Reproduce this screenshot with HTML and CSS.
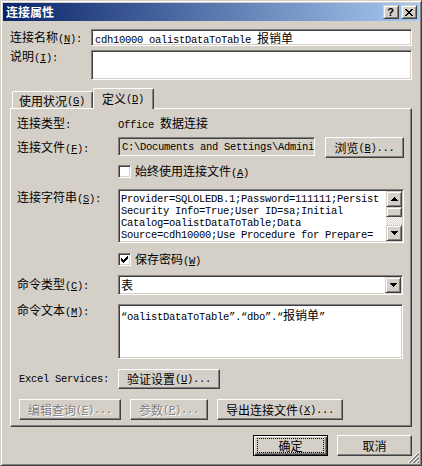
FILE: index.html
```html
<!DOCTYPE html>
<html lang="zh-CN">
<head>
<meta charset="utf-8">
<title>连接属性</title>
<link rel="stylesheet" href="styles.css">
</head>
<body>
<div class="window">
  <div class="titlebar">
    <span class="title">连接属性</span>
    <div class="tbtns">
      <span class="tbtn help">?</span>
      <span class="tbtn close"><svg width="8" height="7" viewBox="0 0 8 7"><path d="M0 0h2v1H0zM6 0h2v1H6zM1 1h2v1H1zM5 1h2v1H5zM2 2h4v1H2zM3 3h2v1H3zM2 4h4v1H2zM1 5h2v1H1zM5 5h2v1H5zM0 6h2v1H0zM6 6h2v1H6z"/></svg></span>
    </div>
  </div>

  <div class="client">
    <div class="row r-name">
      <span class="lbl-top">连接名称<span class="m">(<u>N</u>):</span></span>
      <div class="edit name-edit mono">cdh10000 oalistDataToTable <span class="cjk">报销单</span></div>
    </div>
    <div class="row r-desc">
      <span class="lbl-top">说明<span class="m">(<u>I</u>):</span></span>
      <div class="edit desc-edit"></div>
    </div>

    <div class="tabs">
      <span class="tab inactive">使用状况<span class="m">(<u>G</u>)</span></span>
      <span class="tab active">定义<span class="m">(<u>D</u>)</span></span>
    </div>

    <div class="panel">
      <div class="row p-type">
        <span class="plbl">连接类型<span class="m">:</span></span>
        <span class="mono">Office <span class="cjk">数据连接</span></span>
      </div>
      <div class="row p-file">
        <span class="plbl">连接文件<span class="m">(<u>F</u>):</span></span>
        <div class="edit file-edit mono">C:\Documents and Settings\Admini</div>
        <span class="btn browse">浏览<span class="m">(<u>B</u>)...</span></span>
      </div>
      <div class="row p-chk1">
        <span class="chk"></span>
        <span class="chk-text">始终使用连接文件<span class="m">(<u>A</u>)</span></span>
      </div>
      <div class="row p-conn">
        <span class="plbl conn-lbl">连接字符串<span class="m">(<u>S</u>):</span></span>
        <div class="edit conn-edit">
          <div class="conn-text mono">
            <div class="line">Provider=SQLOLEDB.1;Password=111111;Persist</div>
            <div class="line">Security Info=True;User ID=sa;Initial</div>
            <div class="line">Catalog=oalistDataToTable;Data</div>
            <div class="line">Source=cdh10000;Use Procedure for Prepare=</div>
          </div>
          <div class="vscroll">
            <span class="sbtn"><svg width="7" height="4" viewBox="0 0 7 4"><path d="M3 0h1v1H3zM2 1h3v1H2zM1 2h5v1H1zM0 3h7v1H0z"/></svg></span>
            <span class="thumb"></span>
            <span class="track"></span>
            <span class="sbtn"><svg width="7" height="4" viewBox="0 0 7 4"><path d="M0 0h7v1H0zM1 1h5v1H1zM2 2h3v1H2zM3 3h1v1H3z"/></svg></span>
          </div>
        </div>
      </div>
      <div class="row p-chk2">
        <span class="chk"><svg width="7" height="7" viewBox="0 0 7 7"><path d="M6 0h1v1H6zM5 1h2v1H5zM0 2h1v1H0zM4 2h3v1H4zM0 3h2v1H0zM3 3h3v1H3zM0 4h5v1H0zM1 5h3v1H1zM2 6h1v1H2z"/></svg></span>
        <span class="chk-text">保存密码<span class="m">(<u>W</u>)</span></span>
      </div>
      <div class="row p-ctype">
        <span class="plbl">命令类型<span class="m">(<u>C</u>):</span></span>
        <div class="edit combo">
          <span class="combo-text">表</span>
          <span class="sbtn dd"><svg width="7" height="4" viewBox="0 0 7 4"><path d="M0 0h7v1H0zM1 1h5v1H1zM2 2h3v1H2zM3 3h1v1H3z"/></svg></span>
        </div>
      </div>
      <div class="row p-ctext">
        <span class="plbl">命令文本<span class="m">(<u>M</u>):</span></span>
        <div class="edit ctext-edit mono">“oalistDataToTable”.“dbo”.“<span class="cjk">报销单</span>”</div>
      </div>
      <div class="row p-excel">
        <span class="excel-lbl mono">Excel Services:</span>
        <span class="btn auth">验证设置<span class="m">(<u>U</u>)...</span></span>
      </div>
      <div class="row p-btns">
        <span class="btn disabled b-edit">编辑查询<span class="m">(<u>E</u>)...</span></span>
        <span class="btn disabled b-param">参数<span class="m">(<u>P</u>)...</span></span>
        <span class="btn b-export">导出连接文件<span class="m">(<u>X</u>)...</span></span>
      </div>
    </div>

    <div class="footer">
      <span class="btn default">确定</span>
      <span class="btn">取消</span>
    </div>
  </div>

  <svg class="grip" width="12" height="12" viewBox="0 0 12 12" shape-rendering="crispEdges">
    <line x1="12" y1="1" x2="1" y2="12" stroke="#ffffff"/>
    <line x1="12" y1="2" x2="2" y2="12" stroke="#808080"/>
    <line x1="12" y1="3" x2="3" y2="12" stroke="#808080"/>
    <line x1="12" y1="5" x2="5" y2="12" stroke="#ffffff"/>
    <line x1="12" y1="6" x2="6" y2="12" stroke="#808080"/>
    <line x1="12" y1="7" x2="7" y2="12" stroke="#808080"/>
    <line x1="12" y1="9" x2="9" y2="12" stroke="#ffffff"/>
    <line x1="12" y1="10" x2="10" y2="12" stroke="#808080"/>
    <line x1="12" y1="11" x2="11" y2="12" stroke="#808080"/>
  </svg>
</div>
</body>
</html>
```

FILE: styles.css
```css
* { box-sizing: border-box; }

html, body {
  margin: 0;
  padding: 0;
  background: #d4d0c8;
}

body {
  font-family: "Noto Sans CJK SC", "Liberation Sans", sans-serif;
  font-size: 12px;
  line-height: 12px;
  color: #000;
}

u { text-decoration: underline; text-underline-offset: 1px; }

.m {
  font-family: "Liberation Mono", "Noto Sans CJK SC", monospace;
  font-size: 10.5px;
  letter-spacing: -0.3px;
}

.mono {
  font-family: "Liberation Mono", "Noto Sans CJK SC", monospace;
  font-size: 10.5px;
  letter-spacing: -0.3px;
  white-space: nowrap;
}

.cjk {
  font-family: "Noto Sans CJK SC", sans-serif;
  font-size: 12px;
  letter-spacing: 0;
}

/* window frame */
.window {
  position: relative;
  width: 422px;
  height: 466px;
  background: #d4d0c8;
  border: 1px solid;
  border-color: #d4d0c8 #404040 #404040 #d4d0c8;
  box-shadow: inset 1px 1px #ffffff, inset -1px -1px #808080;
  padding: 2px;
  display: flex;
  flex-direction: column;
}

.titlebar {
  flex: none;
  height: 18px;
  display: flex;
  align-items: center;
  background: linear-gradient(to right, #0a246a, #a6caf0);
}

.title {
  flex: 1;
  padding-left: 3px;
  color: #fff;
  font-weight: bold;
  line-height: 14px;
}

.tbtns {
  display: flex;
  gap: 2px;
  margin-right: 2px;
}

.tbtn {
  width: 16px;
  height: 14px;
  background: #d4d0c8;
  border: 1px solid;
  border-color: #d4d0c8 #404040 #404040 #d4d0c8;
  box-shadow: inset 1px 1px #ffffff, inset -1px -1px #808080;
  display: flex;
  align-items: center;
  justify-content: center;
}

.help {
  font-family: "Liberation Sans", sans-serif;
  font-weight: bold;
  font-size: 11px;
  line-height: 11px;
  padding-right: 1px;
}

.close svg { margin-right: 1px; }

/* client */
.client {
  flex: 1;
  display: flex;
  flex-direction: column;
  padding: 0 7px;
}

.row { display: flex; }

.lbl-top { width: 81px; flex: none; }

.edit {
  background: #fff;
  border: 1px solid;
  border-color: #808080 #ffffff #ffffff #808080;
  box-shadow: inset 1px 1px #404040, inset -1px -1px #d4d0c8;
}

.r-name {
  margin-top: 8px;
  height: 17px;
  align-items: center;
}

.name-edit {
  flex: 1;
  height: 17px;
  padding: 1px 3px 0;
  line-height: 13px;
  overflow: hidden;
}

.r-desc {
  margin-top: 4px;
  height: 30px;
  align-items: flex-start;
}

.desc-edit {
  flex: 1;
  height: 30px;
}

/* tabs */
.tabs {
  position: relative;
  z-index: 1;
  display: flex;
  align-items: flex-end;
  height: 21px;
  margin-top: 8px;
  margin-bottom: -1px;
  padding-left: 2px;
}

.tab {
  display: flex;
  align-items: center;
  background: #d4d0c8;
  border: 1px solid;
  border-bottom: 0;
  border-color: #ffffff #404040 transparent #ffffff;
  box-shadow: inset -1px 0 #808080;
  border-radius: 2px 2px 0 0;
}

.tab.inactive {
  width: 81px;
  height: 17px;
  margin-bottom: 1px;
  padding: 1px 0 0 6px;
}

.tab.active {
  width: 61px;
  height: 21px;
  padding: 0 0 1px 8px;
}

/* tab panel */
.panel {
  flex: none;
  height: 319px;
  border: 1px solid;
  border-color: #ffffff #404040 #404040 #ffffff;
  box-shadow: inset -1px -1px #808080;
  padding: 7px 7px 0 6px;
  display: flex;
  flex-direction: column;
}

.plbl { width: 101px; flex: none; }

.p-type { height: 16px; align-items: center; }

.p-file {
  margin-top: 5px;
  height: 21px;
  align-items: center;
}

.file-edit {
  align-self: flex-start;
  width: 197px;
  height: 19px;
  background: #d4d0c8;
  padding: 3px 0 0 3px;
  line-height: 13px;
  overflow: hidden;
}

.btn {
  flex: none;
  display: flex;
  align-items: center;
  justify-content: center;
  background: #d4d0c8;
  border: 1px solid;
  border-color: #ffffff #404040 #404040 #ffffff;
  box-shadow: inset -1px -1px #808080;
  white-space: nowrap;
  height: 21px;
}

.btn.disabled {
  color: #808080;
  text-shadow: 1px 1px 0 #ffffff;
}

.browse { margin-left: auto; width: 79px; }

.p-chk1 {
  margin-top: 7px;
  height: 13px;
  align-items: center;
  padding-left: 101px;
}

.chk-text { line-height: 14px; }

.chk {
  flex: none;
  width: 13px;
  height: 13px;
  margin-right: 4px;
  background: #fff;
  border: 1px solid;
  border-color: #808080 #ffffff #ffffff #808080;
  box-shadow: inset 1px 1px #404040, inset -1px -1px #d4d0c8;
  display: flex;
  align-items: center;
  justify-content: center;
}

.p-conn {
  margin-top: 11px;
  height: 54px;
  align-items: flex-start;
}

.conn-lbl { margin-top: 2px; }

.conn-edit {
  flex: 1;
  height: 54px;
  padding: 1px;
  display: flex;
}

.conn-text {
  flex: 1;
  padding: 2px 0 0 1px;
  overflow: hidden;
}

.line {
  height: 12px;
  line-height: 12px;
  white-space: pre;
}

.vscroll {
  flex: none;
  width: 16px;
  display: flex;
  flex-direction: column;
}

.sbtn {
  flex: none;
  width: 16px;
  height: 16px;
  background: #d4d0c8;
  border: 1px solid;
  border-color: #d4d0c8 #404040 #404040 #d4d0c8;
  box-shadow: inset 1px 1px #ffffff, inset -1px -1px #808080;
  display: flex;
  align-items: center;
  justify-content: center;
}

.thumb {
  flex: none;
  height: 10px;
  background: #d4d0c8;
  border: 1px solid;
  border-color: #d4d0c8 #404040 #404040 #d4d0c8;
  box-shadow: inset 1px 1px #ffffff, inset -1px -1px #808080;
}

.track {
  flex: 1;
  background-image: repeating-conic-gradient(#ffffff 0 25%, #d4d0c8 0 50%);
  background-size: 2px 2px;
}

.p-chk2 {
  margin-top: 10px;
  height: 13px;
  align-items: center;
  padding-left: 101px;
}

.p-ctype {
  margin-top: 9px;
  height: 20px;
  align-items: center;
}

.combo {
  width: 285px;
  height: 20px;
  padding: 1px;
  display: flex;
  align-items: center;
}

.combo-text {
  flex: 1;
  padding-left: 1px;
  line-height: 14px;
}

.dd { margin-left: auto; }

.p-ctext {
  margin-top: 9px;
  height: 55px;
  align-items: flex-start;
}

.ctext-edit {
  width: 285px;
  height: 55px;
  padding: 3px 1px 1px 2px;
  line-height: 13px;
  overflow: hidden;
}

.p-excel {
  margin-top: 10px;
  height: 20px;
  align-items: center;
}

.excel-lbl {
  width: 99px;
  flex: none;
  margin-left: 2px;
}

.auth { width: 102px; height: 20px; }

.p-btns {
  margin-top: 10px;
  height: 21px;
  padding-left: 2px;
  gap: 9px;
}

.b-edit { width: 102px; }
.b-param { width: 78px; }
.b-export { width: 126px; }

/* footer */
.footer {
  margin-top: 8px;
  display: flex;
  justify-content: flex-end;
  gap: 9px;
}

.footer .btn { width: 75px; }

.btn.default {
  position: relative;
  border-color: #000;
  box-shadow: inset 1px 1px #ffffff, inset -1px -1px #404040, inset -2px -2px #808080;
}

.btn.default::after {
  content: "";
  position: absolute;
  top: 2px;
  bottom: 2px;
  left: 3px;
  right: 3px;
  border: 1px dotted #000;
}

.grip {
  position: absolute;
  right: 2px;
  bottom: 2px;
}
```
